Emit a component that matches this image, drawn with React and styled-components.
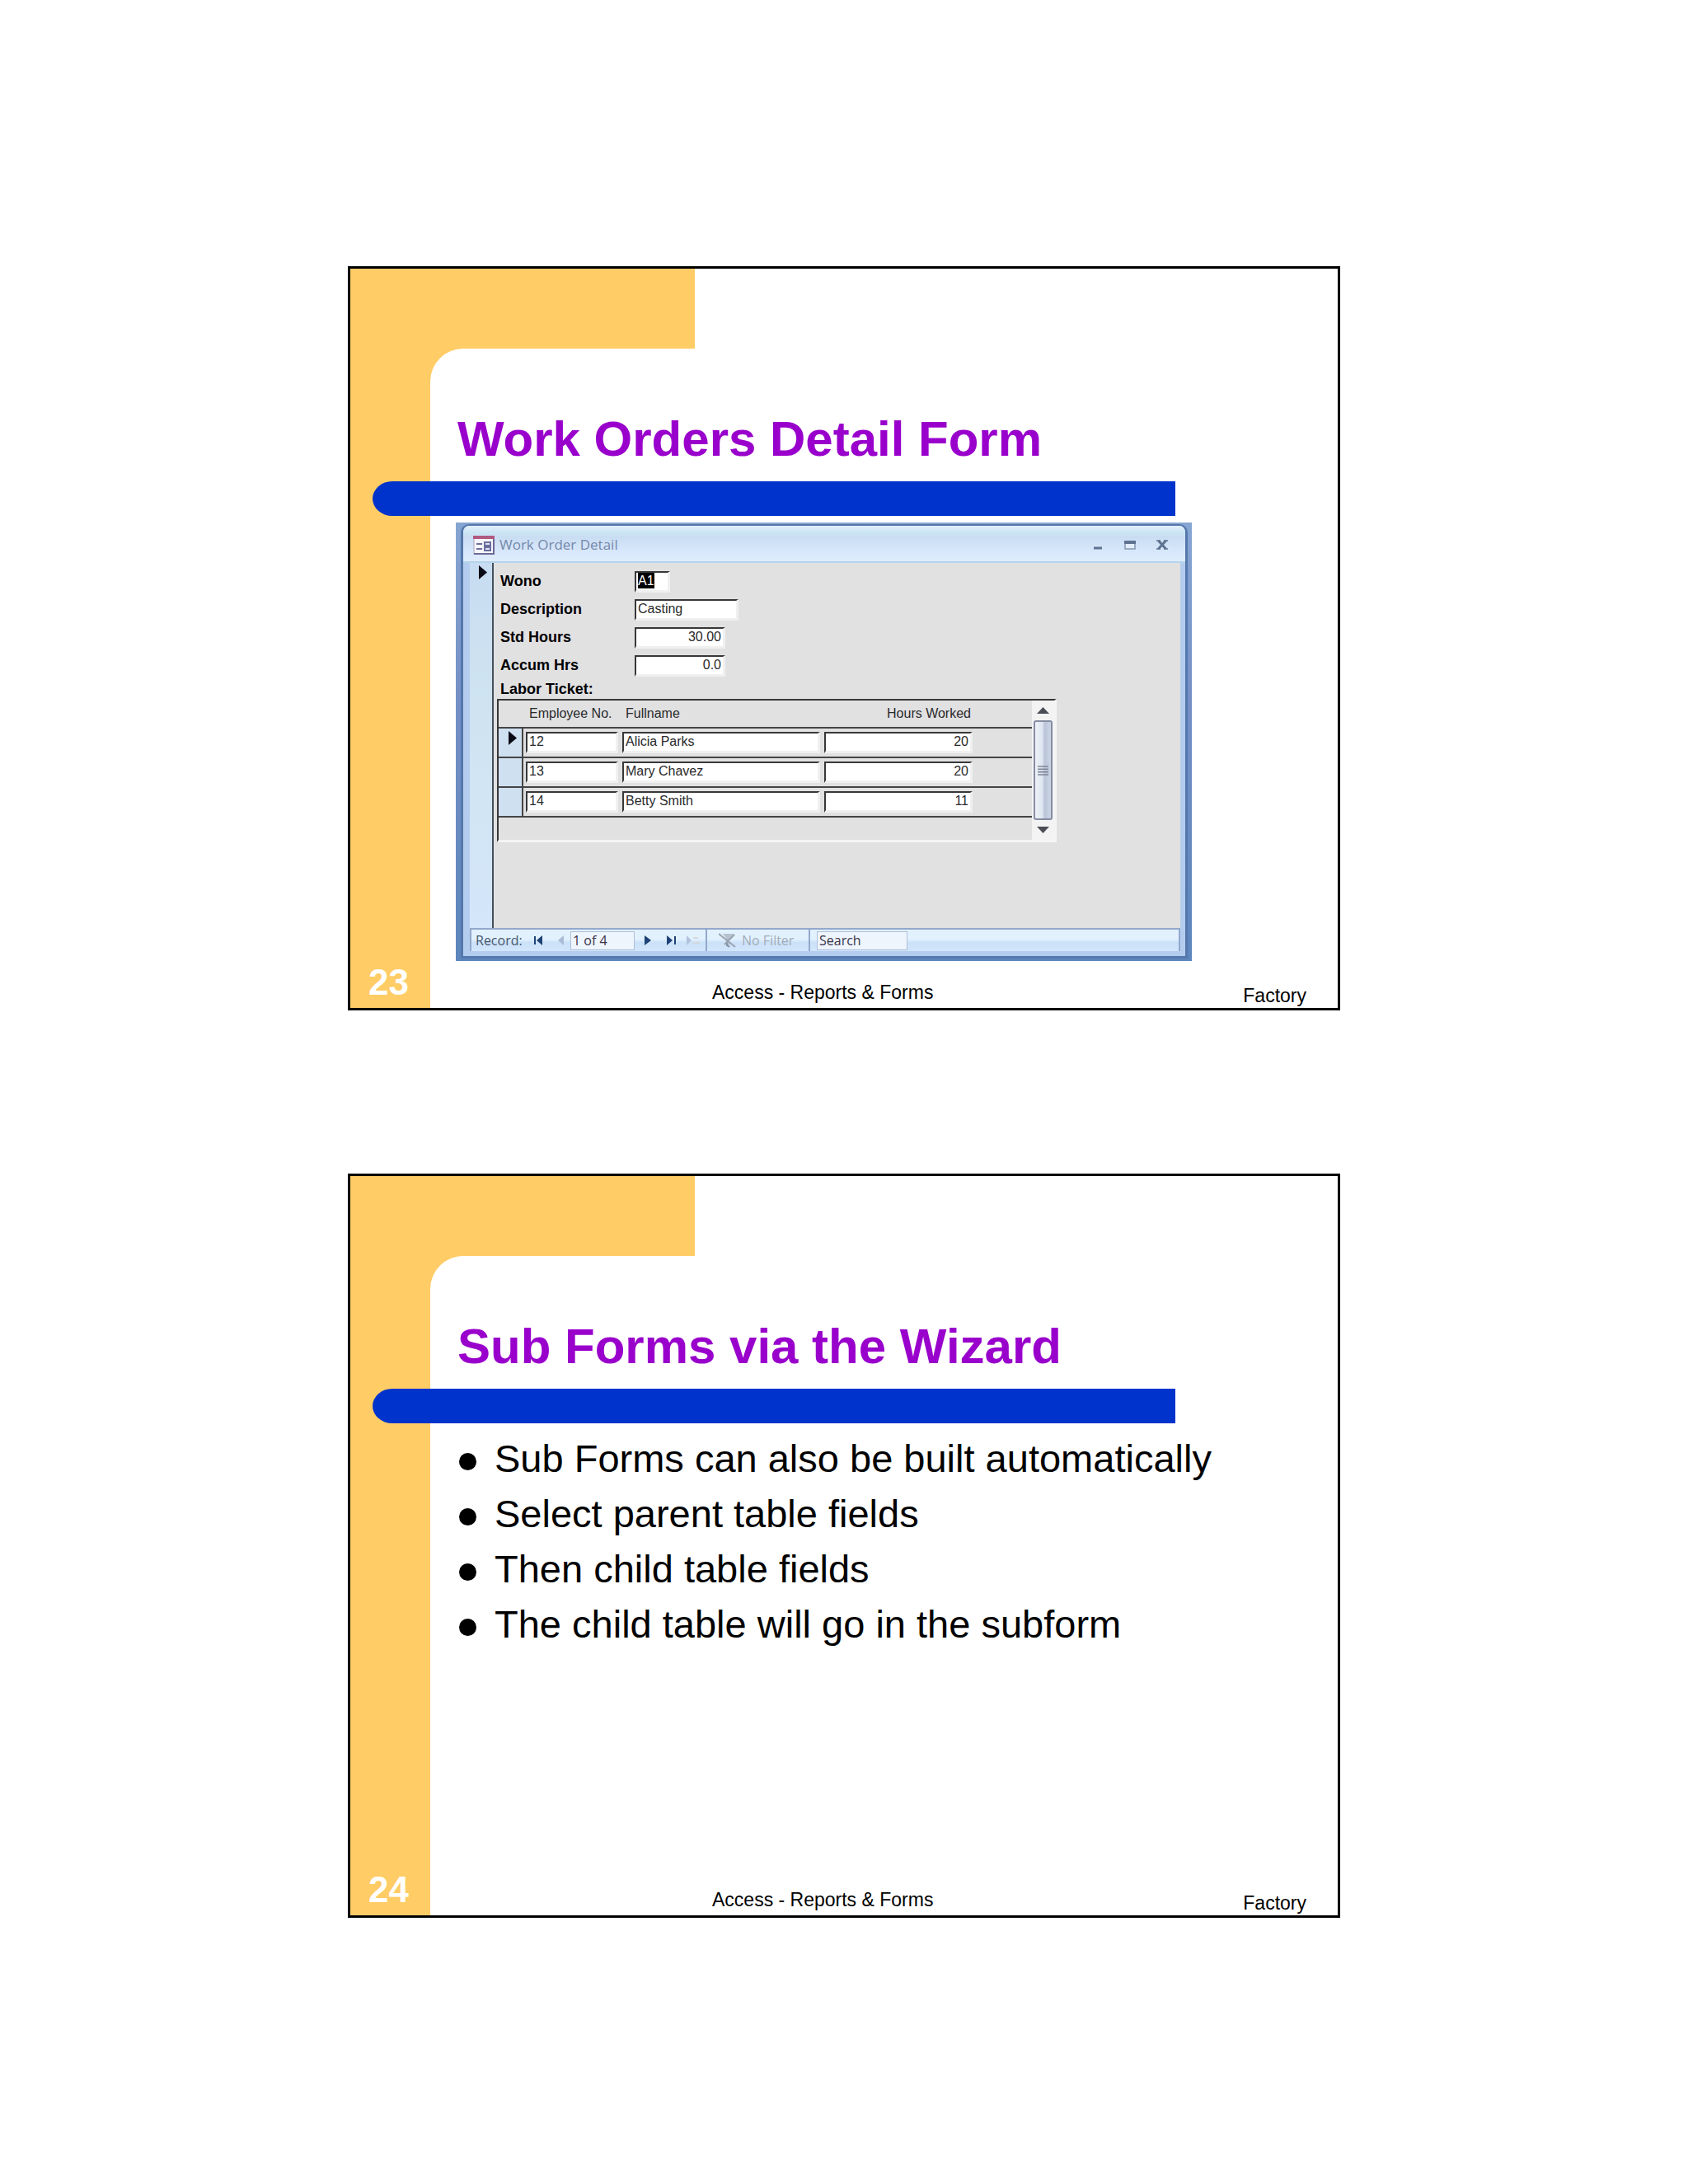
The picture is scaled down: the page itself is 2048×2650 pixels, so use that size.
import styled, { createGlobalStyle } from "styled-components";

const GlobalStyle = createGlobalStyle`
  * {
    box-sizing: border-box;
  }
  body {
    margin: 0;
    background: #ffffff;
    color: #000000;
    font-family: "Liberation Sans", Arial, sans-serif;
  }
  button {
    padding: 0;
    border: none;
    background: none;
    font: inherit;
    color: inherit;
  }
`;

const Page = styled.main`
  display: flex;
  flex-direction: column;
  align-items: center;
  gap: 198px;
  padding: 323px 16px;
`;

/* ---------- slide ---------- */

const SlideFrame = styled.section`
  width: 100%;
  max-width: 1204px;
  aspect-ratio: 4 / 3;
  display: grid;
  grid-template-columns: 97px minmax(0, 1fr);
  border: 3px solid #000000;
  background: #ffffff;
`;

const Rail = styled.div`
  display: flex;
  align-items: flex-end;
  padding: 0 0 6px 22px;
  background: #ffcc66;
`;

const PageNumber = styled.span`
  font-size: 44px;
  line-height: 50px;
  font-weight: bold;
  color: #ffffff;
`;

const Content = styled.div`
  display: flex;
  flex-direction: column;
  padding-top: 97px;
  background: linear-gradient(#ffcc66, #ffcc66) no-repeat 0 0 / 321px 137px;
`;

const Sheet = styled.div`
  flex: 1;
  display: flex;
  flex-direction: column;
  border-top-left-radius: 40px;
  background: #ffffff;
`;

const Title = styled.h1`
  margin: 0;
  padding: 75px 33px 16px;
  font-size: 60px;
  line-height: 70px;
  font-weight: bold;
  color: #9900cc;
`;

const Bar = styled.div`
  height: 42px;
  margin: 0 197px 0 -70px;
  border-radius: 24px 0 0 24px / 21px 0 0 21px;
  background: #0033cc;
`;

const Footer = styled.footer`
  display: flex;
  justify-content: space-between;
  align-items: flex-end;
  margin-top: auto;
  padding: 0 38px 2px 342px;
  font-size: 23px;
  line-height: 26px;
`;

const FooterTitle = styled.span`
  padding-bottom: 4px;
`;

const BulletList = styled.ul`
  margin: 0;
  padding: 9px 35px 0;
  list-style: none;
  font-size: 47px;
  line-height: 67px;
`;

const Bullet = styled.li`
  display: flex;
  align-items: center;
  gap: 22px;
  &::before {
    content: "";
    flex: none;
    width: 21px;
    height: 21px;
    margin-top: 8px;
    border-radius: 50%;
    background: #000000;
  }
`;

/* ---------- Access window ---------- */

const WindowFrame = styled.div`
  margin: 8px 177px 0 31px;
  padding: 2px 5px 3px 6px;
  background: linear-gradient(#86a6d2, #7590c6 40%, #5c86bc);
`;

const WindowInner = styled.div`
  border: solid #5578ac;
  border-width: 2px 3px 3px;
  border-radius: 10px 10px 0 0;
  background: #b4cdef;
  overflow: hidden;
`;

const TitleBar = styled.div`
  display: flex;
  align-items: center;
  height: 45px;
  padding: 3px 9px 0 12px;
  border-bottom: 2px solid #b5d3ea;
  background: linear-gradient(#e2effb, #cce6f5 18%, #c9ddf2 32%, #d6e6fa 65%, #dfecfc);
`;

const WindowName = styled.span`
  flex: 1;
  margin-left: 6px;
  font-family: "Open Sans", "Noto Sans", sans-serif;
  font-size: 17px;
  line-height: 24px;
  color: #7488aa;
`;

const WindowButton = styled.button`
  display: flex;
  align-items: center;
  justify-content: center;
  width: 39px;
  height: 30px;
`;

const FormArea = styled.div`
  display: grid;
  grid-template-columns: 29px minmax(0, 1fr);
  margin: 0 6px 0 8px;
`;

const RecordSelector = styled.div`
  display: flex;
  justify-content: flex-end;
  padding: 3px 6px 0;
  border-right: 2px solid #44505c;
  background: linear-gradient(#c8dcf2, #cfe4f0 40%, #d4e6fa);
`;

const Form = styled.form`
  padding: 10px 150px 104px 4px;
  background: #e1e1e2;
`;

const Fields = styled.div`
  display: flex;
  flex-direction: column;
  gap: 8px;
  padding-left: 4px;
`;

const FieldRow = styled.div`
  display: grid;
  grid-template-columns: 163px 1fr;
  align-items: center;
`;

const FieldLabel = styled.label`
  padding-bottom: 2px;
  font-size: 18px;
  line-height: 20px;
  font-weight: bold;
`;

const SubformLabel = styled.h2`
  margin: 0;
  padding: 5px 0 2px 4px;
  font-size: 18px;
  line-height: 20px;
  font-weight: bold;
`;

const TextBox = styled.input`
  display: block;
  width: ${(props) => props.$width || "100%"};
  height: 26px;
  padding: 0 2px 2px;
  border: solid;
  border-width: 2px 3px 3px 2px;
  border-color: #38383a #f0f0f0 #f0f0f0 #38383a;
  border-radius: 0;
  background: ${(props) =>
    props.$selected
      ? "linear-gradient(#000000, #000000) no-repeat 2px 0 / 20px 19px #ffffff"
      : "#ffffff"};
  color: ${(props) => (props.$selected ? "#ffffff" : "#2a2a2c")};
  font-family: "Liberation Sans", Arial, sans-serif;
  font-size: 16px;
  text-align: ${(props) => props.$align || "left"};
  outline: none;
`;

const Subform = styled.div`
  display: flex;
  border: solid;
  border-width: 2px 3px 3px 2px;
  border-color: #38383a #f4f4f4 #f4f4f4 #38383a;
`;

const TableWrap = styled.div`
  flex: 1;
  min-width: 0;
  padding-bottom: 27px;
`;

const Table = styled.table`
  width: 100%;
  table-layout: fixed;
  border-collapse: separate;
  border-spacing: 0;
`;

const Col = styled.col`
  width: ${(props) => props.$width};
`;

const Th = styled.th`
  height: 34px;
  padding: 0 4px 0 7px;
  border-bottom: 2px solid #444446;
  font-size: 16px;
  line-height: 20px;
  font-weight: normal;
  text-align: ${(props) => props.$align || "left"};
  white-space: nowrap;
  color: #2a2a2c;
`;

const Td = styled.td`
  height: 36px;
  padding: 4px 2px 4px 3px;
  border-bottom: 2px solid #444446;
`;

const RowSelector = styled.td`
  padding: 3px 6px 0;
  border-right: 2px solid #444446;
  border-bottom: 2px solid #444446;
  background: #cfe0f0;
  line-height: 0;
  text-align: right;
  vertical-align: top;
`;

const ScrollBar = styled.div`
  display: flex;
  flex-direction: column;
  width: 27px;
  background: #f3f3f4;
`;

const ScrollButton = styled.button`
  display: flex;
  align-items: center;
  justify-content: center;
  height: 24px;
`;

const ScrollThumb = styled.div`
  flex: 1;
  display: flex;
  align-items: center;
  justify-content: center;
  margin: 0 2px;
  border: 2px solid #868da2;
  border-radius: 3px;
  background: linear-gradient(90deg, #eef2f8, #dfe6f0 45%, #b9c4d8 60%, #ccd6e6);
`;

/* ---------- record navigation ---------- */

const StatusBar = styled.div`
  display: flex;
  align-items: center;
  height: 28px;
  margin: 0 6px 6px 8px;
  padding-left: 5px;
  border: solid #93a8cc;
  border-width: 2px 2px 0;
  background: linear-gradient(#e2f1fe 45%, #cbe1f8 60%, #d2e6fc);
  font-family: "Open Sans", "Noto Sans", sans-serif;
  font-size: 16px;
  line-height: 22px;
  color: #46566e;
`;

const RecordLabel = styled.label`
  width: 62px;
`;

const NavButton = styled.button`
  display: flex;
  align-items: center;
  justify-content: center;
  width: ${(props) => props.$width};
  height: 24px;
`;

const NavBox = styled.input`
  width: ${(props) => props.$width};
  height: 23px;
  padding: 0 2px;
  border: 1px solid #aebfda;
  border-radius: 0;
  background: #eef5fc;
  color: #3a3348;
  font-family: "Open Sans", "Noto Sans", sans-serif;
  font-size: 16px;
  outline: none;
  &::placeholder {
    color: #3a3348;
    opacity: 1;
  }
`;

const Divider = styled.span`
  align-self: stretch;
  width: 2px;
  background: #93a8cc;
`;

const FilterButton = styled.button`
  display: flex;
  align-items: center;
  gap: 7px;
  width: 123px;
  padding-left: 14px;
  color: #a3adb9;
  white-space: nowrap;
`;

const SearchSlot = styled.div`
  display: flex;
  padding-left: 8px;
`;

const CurrentArrow = () => (
  <svg width="10" height="17" viewBox="0 0 10 17" aria-hidden="true">
    <path d="M0 0 L10 8.5 L0 17 Z" fill="#0a0a14" />
  </svg>
);

const FormIcon = () => (
  <svg width="26" height="23" viewBox="0 0 26 23" aria-hidden="true">
    <rect x="1" y="1" width="24" height="21" fill="#f6f5fb" stroke="#a9a2c0" />
    <rect x="0" y="0" width="26" height="4" fill="#b05a80" />
    <path d="M25 4 V22 H1" fill="none" stroke="#6d6a98" strokeWidth="2" />
    <path d="M4 10 H11 M4 16 H11" stroke="#6a6f9c" strokeWidth="2" />
    <rect x="14" y="8" width="7" height="4" fill="#dfe2f3" stroke="#6a6f9c" strokeWidth="2" />
    <rect x="14" y="14" width="7" height="4" fill="#dfe2f3" stroke="#6a6f9c" strokeWidth="2" />
  </svg>
);

const MinimizeIcon = () => (
  <svg width="14" height="14" viewBox="0 0 14 14" aria-hidden="true">
    <path d="M2 11 H12" stroke="#5d7390" strokeWidth="3" />
  </svg>
);

const MaximizeIcon = () => (
  <svg width="14" height="12" viewBox="0 0 14 12" aria-hidden="true">
    <rect x="1" y="2" width="12" height="9" fill="#e4eefa" stroke="#8496b0" strokeWidth="1.5" />
    <rect x="0" y="1" width="14" height="4" fill="#5d7390" />
  </svg>
);

const CloseIcon = () => (
  <svg width="14" height="12" viewBox="0 0 14 12" aria-hidden="true">
    <path d="M2.500 1 L11.500 11 M11.500 1 L2.500 11" stroke="#5d7390" strokeWidth="3" />
    <path d="M0 1 H5 M9 1 H14 M0 11 H5 M9 11 H14" stroke="#5d7390" strokeWidth="1.5" />
  </svg>
);

const ScrollArrow = ({ down }) => (
  <svg width="15" height="8" viewBox="0 0 15 8" aria-hidden="true">
    <path d={down ? "M0 0 H15 L7.5 8 Z" : "M0 8 H15 L7.5 0 Z"} fill="#4b4d55" />
  </svg>
);

const GripIcon = () => (
  <svg width="13" height="12" viewBox="0 0 13 12" aria-hidden="true">
    <path d="M0 1 H13 M0 4.300 H13 M0 7.600 H13 M0 11 H13" stroke="#7f8798" strokeWidth="1.6" />
  </svg>
);

const FirstIcon = () => (
  <svg width="11" height="12" viewBox="0 0 11 12" aria-hidden="true">
    <path d="M1 1 V11" stroke="#1f4276" strokeWidth="2" />
    <path d="M10 0 V12 L3 6 Z" fill="#1f4276" />
  </svg>
);

const PrevIcon = () => (
  <svg width="7" height="12" viewBox="0 0 7 12" aria-hidden="true">
    <path d="M7 0 V12 L0 6 Z" fill="#abbcd6" />
  </svg>
);

const NextIcon = () => (
  <svg width="8" height="12" viewBox="0 0 8 12" aria-hidden="true">
    <path d="M0 0 V12 L8 6 Z" fill="#1f4276" />
  </svg>
);

const LastIcon = () => (
  <svg width="11" height="12" viewBox="0 0 11 12" aria-hidden="true">
    <path d="M0 0 V12 L7 6 Z" fill="#1f4276" />
    <path d="M10 1 V11" stroke="#1f4276" strokeWidth="2" />
  </svg>
);

const NewIcon = () => (
  <svg width="17" height="14" viewBox="0 0 17 14" aria-hidden="true">
    <path d="M0 1 V13 L6 7 Z" fill="#b3c3dc" />
    <path d="M8 4 H14 M8 10 H16" stroke="#d3d8da" strokeWidth="2" />
  </svg>
);

const FilterIcon = () => (
  <svg width="21" height="18" viewBox="0 0 21 18" aria-hidden="true">
    <path d="M5 1 H19 L13 8 V17 L10 15 V8 Z" fill="#b8c2cf" />
    <path d="M10 8 V15 L13 17" fill="none" stroke="#8593a5" strokeWidth="2" />
    <path d="M0 1 L20 17 M19 2 L7 14" stroke="#98a4b3" strokeWidth="2" />
  </svg>
);

const fields = [
  { id: "wono", label: "Wono", value: "A1", width: "43px", selected: true },
  { id: "description", label: "Description", value: "Casting", width: "126px" },
  { id: "stdHours", label: "Std Hours", value: "30.00", width: "110px", align: "right" },
  { id: "accumHrs", label: "Accum Hrs", value: "0.0", width: "110px", align: "right" },
];

const tickets = [
  { employee: "12", name: "Alicia Parks", hours: "20" },
  { employee: "13", name: "Mary Chavez", hours: "20" },
  { employee: "14", name: "Betty Smith", hours: "11" },
];

const points = [
  "Sub Forms can also be built automatically",
  "Select parent table fields",
  "Then child table fields",
  "The child table will go in the subform",
];

const Slide = ({ number, title, children }) => (
  <SlideFrame>
    <Rail>
      <PageNumber>{number}</PageNumber>
    </Rail>
    <Content>
      <Sheet>
        <Title>{title}</Title>
        <Bar />
        {children}
        <Footer>
          <FooterTitle>Access - Reports &amp; Forms</FooterTitle>
          <span>Factory</span>
        </Footer>
      </Sheet>
    </Content>
  </SlideFrame>
);

const LaborTickets = () => (
  <Subform>
    <TableWrap>
      <Table aria-label="Labor Ticket">
        <colgroup>
          <Col $width="30px" />
          <Col $width="117px" />
          <Col $width="245px" />
          <Col $width="185px" />
          <Col />
        </colgroup>
        <thead>
          <tr>
            <Th />
            <Th scope="col">Employee No.</Th>
            <Th scope="col">Fullname</Th>
            <Th scope="col" $align="right">
              Hours Worked
            </Th>
            <Th />
          </tr>
        </thead>
        <tbody>
          {tickets.map((ticket, index) => (
            <tr key={ticket.employee}>
              <RowSelector>{index === 0 && <CurrentArrow />}</RowSelector>
              <Td>
                <TextBox aria-label="Employee No." defaultValue={ticket.employee} />
              </Td>
              <Td>
                <TextBox aria-label="Fullname" defaultValue={ticket.name} />
              </Td>
              <Td>
                <TextBox aria-label="Hours Worked" defaultValue={ticket.hours} $align="right" />
              </Td>
              <Td />
            </tr>
          ))}
        </tbody>
      </Table>
    </TableWrap>
    <ScrollBar>
      <ScrollButton type="button" aria-label="Scroll up">
        <ScrollArrow />
      </ScrollButton>
      <ScrollThumb>
        <GripIcon />
      </ScrollThumb>
      <ScrollButton type="button" aria-label="Scroll down">
        <ScrollArrow down />
      </ScrollButton>
    </ScrollBar>
  </Subform>
);

const RecordNavigation = () => (
  <StatusBar>
    <RecordLabel htmlFor="record">Record:</RecordLabel>
    <NavButton aria-label="First record" $width="29px">
      <FirstIcon />
    </NavButton>
    <NavButton aria-label="Previous record" $width="24px">
      <PrevIcon />
    </NavButton>
    <NavBox id="record" defaultValue="1 of 4" $width="78px" />
    <NavButton aria-label="Next record" $width="32px">
      <NextIcon />
    </NavButton>
    <NavButton aria-label="Last record" $width="24px">
      <LastIcon />
    </NavButton>
    <NavButton aria-label="New record" $width="30px">
      <NewIcon />
    </NavButton>
    <Divider />
    <FilterButton>
      <FilterIcon />
      No Filter
    </FilterButton>
    <Divider />
    <SearchSlot>
      <NavBox aria-label="Search" placeholder="Search" $width="110px" />
    </SearchSlot>
  </StatusBar>
);

const WorkOrderWindow = () => (
  <WindowFrame>
    <WindowInner>
      <TitleBar>
        <FormIcon />
        <WindowName>Work Order Detail</WindowName>
        <WindowButton aria-label="Minimize">
          <MinimizeIcon />
        </WindowButton>
        <WindowButton aria-label="Maximize">
          <MaximizeIcon />
        </WindowButton>
        <WindowButton aria-label="Close">
          <CloseIcon />
        </WindowButton>
      </TitleBar>
      <FormArea>
        <RecordSelector>
          <CurrentArrow />
        </RecordSelector>
        <Form>
          <Fields>
            {fields.map((field) => (
              <FieldRow key={field.id}>
                <FieldLabel htmlFor={field.id}>{field.label}</FieldLabel>
                <TextBox
                  id={field.id}
                  defaultValue={field.value}
                  $width={field.width}
                  $align={field.align}
                  $selected={field.selected}
                />
              </FieldRow>
            ))}
          </Fields>
          <SubformLabel>Labor Ticket:</SubformLabel>
          <LaborTickets />
        </Form>
      </FormArea>
      <RecordNavigation />
    </WindowInner>
  </WindowFrame>
);

const App = () => {
  return (
    <>
      <GlobalStyle />
      <Page>
        <Slide number="23" title="Work Orders Detail Form">
          <WorkOrderWindow />
        </Slide>
        <Slide number="24" title="Sub Forms via the Wizard">
          <BulletList>
            {points.map((point) => (
              <Bullet key={point}>{point}</Bullet>
            ))}
          </BulletList>
        </Slide>
      </Page>
    </>
  );
};

export default App;
